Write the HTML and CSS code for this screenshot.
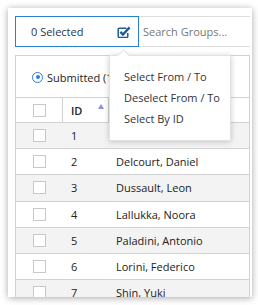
FILE: index.html
```html
<!DOCTYPE html>
<html lang="en">
<head>
    <meta charset="UTF-8">
    <meta name="viewport" content="width=device-width, initial-scale=1.0">
    <title>Groups</title>
    <link rel="stylesheet" href="styles.css">
</head>
<body>
    <div class="card">
        <div class="toolbar">
            <div class="select-button">
                <span>0 Selected</span>
                <svg class="check-icon" width="14" height="13" viewBox="0 0 14 13">
                    <path d="M9.5 3.2H2.6a1.4 1.4 0 0 0-1.4 1.4v6.6a1.4 1.4 0 0 0 1.4 1.4h6.8a1.4 1.4 0 0 0 1.4-1.4V8" fill="none" stroke="#1b5b99" stroke-width="1.5"/>
                    <path d="M3.4 6.9l2.5 2.6L12.6 2.4" fill="none" stroke="#1b5b99" stroke-width="2.3"/>
                </svg>
            </div>
            <input class="search" type="text" placeholder="Search Groups...">
        </div>

        <div class="panel">
            <div class="filter">
                <span class="radio"></span>
                <span>Submitted (1)</span>
            </div>

            <div class="row header">
                <div class="cell-check"><span class="box"></span></div>
                <div class="cell-id">ID <span class="sort-up"></span></div>
                <div class="cell-name"></div>
            </div>
            <div class="row">
                <div class="cell-check"><span class="box"></span></div>
                <div class="cell-id">1</div>
                <div class="cell-name"></div>
            </div>
            <div class="row">
                <div class="cell-check"><span class="box"></span></div>
                <div class="cell-id">2</div>
                <div class="cell-name">Delcourt, Daniel</div>
            </div>
            <div class="row">
                <div class="cell-check"><span class="box"></span></div>
                <div class="cell-id">3</div>
                <div class="cell-name">Dussault, Leon</div>
            </div>
            <div class="row">
                <div class="cell-check"><span class="box"></span></div>
                <div class="cell-id">4</div>
                <div class="cell-name">Lallukka, Noora</div>
            </div>
            <div class="row">
                <div class="cell-check"><span class="box"></span></div>
                <div class="cell-id">5</div>
                <div class="cell-name">Paladini, Antonio</div>
            </div>
            <div class="row">
                <div class="cell-check"><span class="box"></span></div>
                <div class="cell-id">6</div>
                <div class="cell-name">Lorini, Federico</div>
            </div>
            <div class="row">
                <div class="cell-check"><span class="box"></span></div>
                <div class="cell-id">7</div>
                <div class="cell-name">Shin, Yuki</div>
            </div>
        </div>

        <div class="popover">
            <div class="menu-item">Select From / To</div>
            <div class="menu-item">Deselect From / To</div>
            <div class="menu-item">Select By ID</div>
        </div>
    </div>
</body>
</html>
```

FILE: styles.css
```css
body {
    margin: 0;
    font-family: "Open Sans", Arial, sans-serif;
    font-size: 11px;
    color: #222;
    background-color: #fff;
}

.card {
    position: relative;
    width: 244px;
    height: 289px;
    margin: 8px 6px 8px 8px;
    background-color: #fff;
    box-shadow: 0 1px 7px rgba(0, 0, 0, 0.35);
    overflow: hidden;
}

.toolbar {
    display: flex;
    padding: 8px 2px 0 7px;
}

.select-button {
    box-sizing: border-box;
    width: 124px;
    height: 31px;
    border: 1px solid #2a7fd4;
    display: flex;
    align-items: center;
    justify-content: space-between;
    padding: 0 7px 0 15px;
    color: #1f3550;
}

.check-icon {
    display: block;
}

.search {
    box-sizing: border-box;
    flex: 1;
    min-width: 0;
    height: 31px;
    border: none;
    border-top: 1px solid #ddd;
    border-bottom: 1px solid #ddd;
    padding: 0 4px;
    font-family: inherit;
    font-size: 11px;
    outline: none;
}

.search::placeholder {
    color: #777;
}

.panel {
    margin: 8px 2px 0 7px;
    border: 1px solid #d2d2d2;
    border-bottom: none;
}

.filter {
    box-sizing: border-box;
    height: 42px;
    display: flex;
    align-items: center;
    gap: 4px;
    padding: 1px 0 0 16px;
    border-bottom: 1px solid #d2d2d2;
}

.radio {
    box-sizing: border-box;
    width: 11px;
    height: 11px;
    border: 1px solid #2a7fd4;
    border-radius: 50%;
    display: flex;
    align-items: center;
    justify-content: center;
}

.radio::after {
    content: "";
    width: 4px;
    height: 4px;
    border-radius: 50%;
    background-color: #2a7fd4;
}

.row {
    box-sizing: border-box;
    height: 26.2px;
    display: flex;
    align-items: stretch;
    border-bottom: 1px solid #d2d2d2;
}

.row:nth-child(odd) {
    background-color: #f3f3f3;
}

.row.header {
    height: 25px;
    background-color: #fff;
    font-weight: 600;
}

.cell-check {
    width: 46px;
    display: flex;
    align-items: center;
    justify-content: center;
}

.header .cell-check {
    border-right: 1px solid #d2d2d2;
}

.box {
    box-sizing: border-box;
    width: 13px;
    height: 13px;
    border: 1px solid #c9c9c9;
    background-color: #fff;
}

.cell-id {
    box-sizing: border-box;
    width: 46px;
    display: flex;
    align-items: center;
    padding-left: 9px;
}

.header .cell-id {
    padding-left: 8px;
    justify-content: space-between;
    padding-right: 4px;
    border-right: 1px solid #d2d2d2;
}

.sort-up {
    align-self: flex-start;
    margin-top: 6px;
    width: 0;
    height: 0;
    border-left: 3px solid transparent;
    border-right: 3px solid transparent;
    border-bottom: 5px solid #8d90dc;
}

.cell-name {
    flex: 1;
    display: flex;
    align-items: center;
    padding-left: 8px;
}

.popover {
    position: absolute;
    left: 101px;
    top: 47px;
    width: 122px;
    height: 86px;
    box-sizing: border-box;
    padding-top: 10px;
    background-color: #fff;
    border: 1px solid #e2e2e2;
    box-shadow: 0 1px 6px rgba(0, 0, 0, 0.2);
    color: #333;
}

.popover::before {
    content: "";
    position: absolute;
    left: 9px;
    top: -5px;
    width: 8px;
    height: 8px;
    background-color: #fff;
    border-left: 1px solid #e2e2e2;
    border-top: 1px solid #e2e2e2;
    transform: rotate(45deg);
}

.menu-item {
    height: 21px;
    line-height: 21px;
    padding-left: 14px;
    white-space: nowrap;
}
```
